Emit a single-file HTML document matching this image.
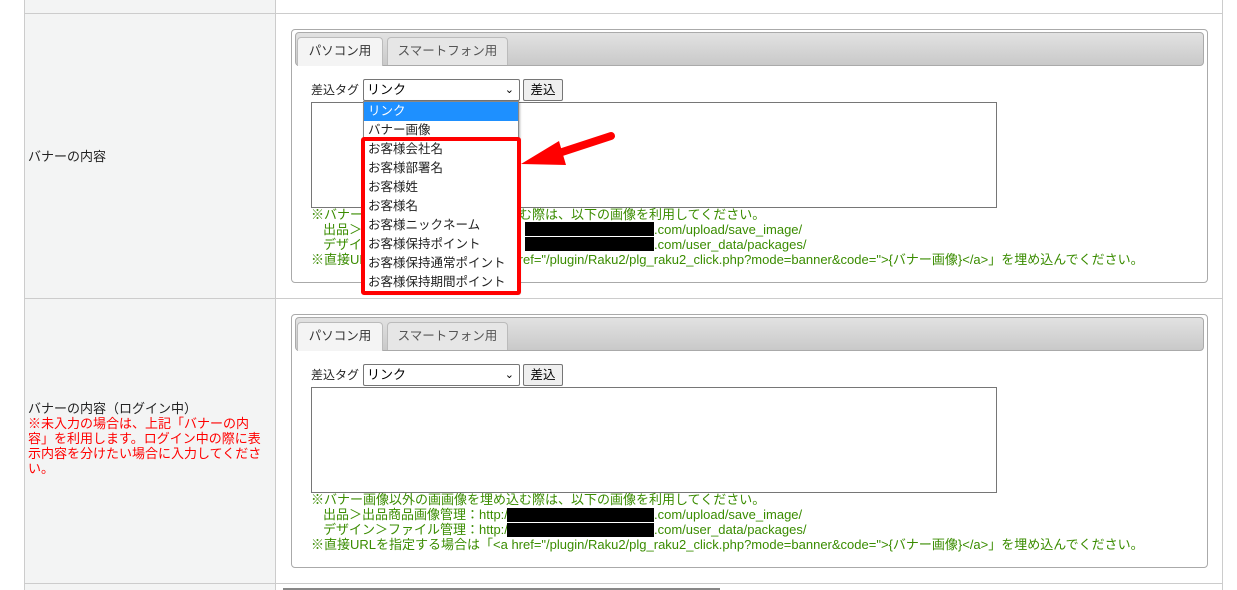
<!DOCTYPE html>
<html><head><meta charset="utf-8"><style>
*{box-sizing:border-box;margin:0;padding:0}
body{width:1237px;height:590px;background:#fff;position:relative;overflow:hidden;font-family:"Liberation Sans","Noto Sans CJK JP",sans-serif;font-size:12px;color:#333}
.a{position:absolute}
.lbl{background:#f3f4f4}
.box{border:1px solid #aaa;border-radius:4px;background:#fff}
.bar{border:1px solid #aaa;border-radius:4px;background:linear-gradient(#e2e2e2,#c9c9c9)}
.tab{border:1px solid #bbb;border-bottom:none;border-radius:4px 4px 0 0;font-size:12.5px;color:#555;text-align:center;line-height:26px}
.sel{border:1px solid #767676;border-radius:2px;background:#fff;font-size:13px;color:#000;padding-left:3px;line-height:20px}
.btn{border:1px solid #767676;border-radius:2px;background:#efefef;font-size:12.5px;color:#000;text-align:center;line-height:20px}
.ta{border:1px solid #767676;background:#fff}
.g{color:#3a8c00;font-size:13px;line-height:15px;white-space:nowrap}
.blk{background:#000}
.dd div{height:19px;line-height:18px;padding-left:4px;font-size:12.5px;color:#222}
</style></head><body>
<div class="a lbl" style="left:24px;top:0;width:251px;height:590px"></div>
<div class="a" style="left:24px;top:0;width:1px;height:590px;background:#ccc"></div>
<div class="a" style="left:275px;top:0;width:1px;height:590px;background:#ccc"></div>
<div class="a" style="left:1222px;top:0;width:1px;height:590px;background:#ccc"></div>
<div class="a" style="left:24px;top:13px;width:1199px;height:1px;background:#ccc"></div>
<div class="a" style="left:24px;top:298px;width:1199px;height:1px;background:#ccc"></div>
<div class="a" style="left:24px;top:583px;width:1199px;height:1px;background:#ccc"></div>
<div class="a" style="left:283px;top:588px;width:437px;height:2px;background:#888"></div>

<div class="a" style="left:28px;top:146px;font-size:13px;color:#222">バナーの内容</div>
<div class="a" style="left:28px;top:401px;width:236px;font-size:13px;line-height:15px;color:#222">バナーの内容（ログイン中）<br><span style="color:#f00">※未入力の場合は、上記「バナーの内容」を利用します。ログイン中の際に表示内容を分けたい場合に入力してください。</span></div>

<div class="a box" style="left:291px;top:29px;width:917px;height:254px"></div>
<div class="a bar" style="left:295px;top:32px;width:909px;height:34px"></div>
<div class="a tab" style="left:297px;top:37px;width:86px;height:29px;background:#f4f4f4;color:#333">パソコン用</div>
<div class="a tab" style="left:387px;top:37px;width:121px;height:28px;background:#e6e6e6">スマートフォン用</div>
<div class="a" style="left:311px;top:81px;font-size:12px;color:#222">差込タグ</div>
<div class="a sel" style="left:363px;top:79px;width:157px;height:22px">リンク<span style="position:absolute;right:5px;top:0;font-size:11px">⌄</span></div>
<div class="a btn" style="left:523px;top:79px;width:40px;height:22px">差込</div>
<div class="a ta" style="left:311px;top:102px;width:686px;height:106px"></div>
<div class="a g" style="left:311px;top:207px">※バナー画像以外の画画像を埋め込む際は、以下の画像を利用してください。</div>
<div class="a g" style="left:323px;top:222px">出品＞出品商品画像管理：http://</div>
<div class="a g" style="left:654px;top:222px">.com/upload/save_image/</div>
<div class="a g" style="left:323px;top:237px">デザイン＞ファイル管理：http://</div>
<div class="a g" style="left:654px;top:237px">.com/user_data/packages/</div>
<div class="a g" style="left:311px;top:252px">※直接URLを指定する場合は「&lt;a href="/plugin/Raku2/plg_raku2_click.php?mode=banner&amp;code="&gt;{バナー画像}&lt;/a&gt;」を埋め込んでください。</div>
<div class="a blk" style="left:525px;top:222px;width:129px;height:14px"></div>
<div class="a blk" style="left:525px;top:237px;width:129px;height:14px"></div>

<div class="a dd" style="left:363px;top:101px;width:156px;height:192px;background:#fff;border:1px solid #888;box-shadow:1px 1px 2px rgba(0,0,0,.3)">
<div style="background:#1e90ff;color:#fff">リンク</div><div>バナー画像</div><div>お客様会社名</div><div>お客様部署名</div><div>お客様姓</div><div>お客様名</div><div>お客様ニックネーム</div><div>お客様保持ポイント</div><div>お客様保持通常ポイント</div><div>お客様保持期間ポイント</div>
</div>
<div class="a" style="left:361px;top:137px;width:160px;height:158px;border:4px solid #f00;border-radius:3px"></div>
<svg class="a" style="left:0;top:0" width="1237" height="590"><line x1="611" y1="136" x2="556" y2="154" stroke="#f00" stroke-width="8" stroke-linecap="round"/><polygon points="521,164 559,141 566,165" fill="#f00"/></svg>

<div class="a box" style="left:291px;top:314px;width:917px;height:254px"></div>
<div class="a bar" style="left:295px;top:317px;width:909px;height:34px"></div>
<div class="a tab" style="left:297px;top:322px;width:86px;height:29px;background:#f4f4f4;color:#333">パソコン用</div>
<div class="a tab" style="left:387px;top:322px;width:121px;height:28px;background:#e6e6e6">スマートフォン用</div>
<div class="a" style="left:311px;top:366px;font-size:12px;color:#222">差込タグ</div>
<div class="a sel" style="left:363px;top:364px;width:157px;height:22px">リンク<span style="position:absolute;right:5px;top:0;font-size:11px">⌄</span></div>
<div class="a btn" style="left:523px;top:364px;width:40px;height:22px">差込</div>
<div class="a ta" style="left:311px;top:387px;width:686px;height:106px"></div>
<div class="a g" style="left:311px;top:492px">※バナー画像以外の画画像を埋め込む際は、以下の画像を利用してください。</div>
<div class="a g" style="left:323px;top:507px">出品＞出品商品画像管理：http://</div>
<div class="a g" style="left:654px;top:507px">.com/upload/save_image/</div>
<div class="a g" style="left:323px;top:522px">デザイン＞ファイル管理：http://</div>
<div class="a g" style="left:654px;top:522px">.com/user_data/packages/</div>
<div class="a g" style="left:311px;top:537px">※直接URLを指定する場合は「&lt;a href="/plugin/Raku2/plg_raku2_click.php?mode=banner&amp;code="&gt;{バナー画像}&lt;/a&gt;」を埋め込んでください。</div>
<div class="a blk" style="left:507px;top:508px;width:147px;height:14px"></div>
<div class="a blk" style="left:507px;top:523px;width:147px;height:14px"></div>
</body></html>
